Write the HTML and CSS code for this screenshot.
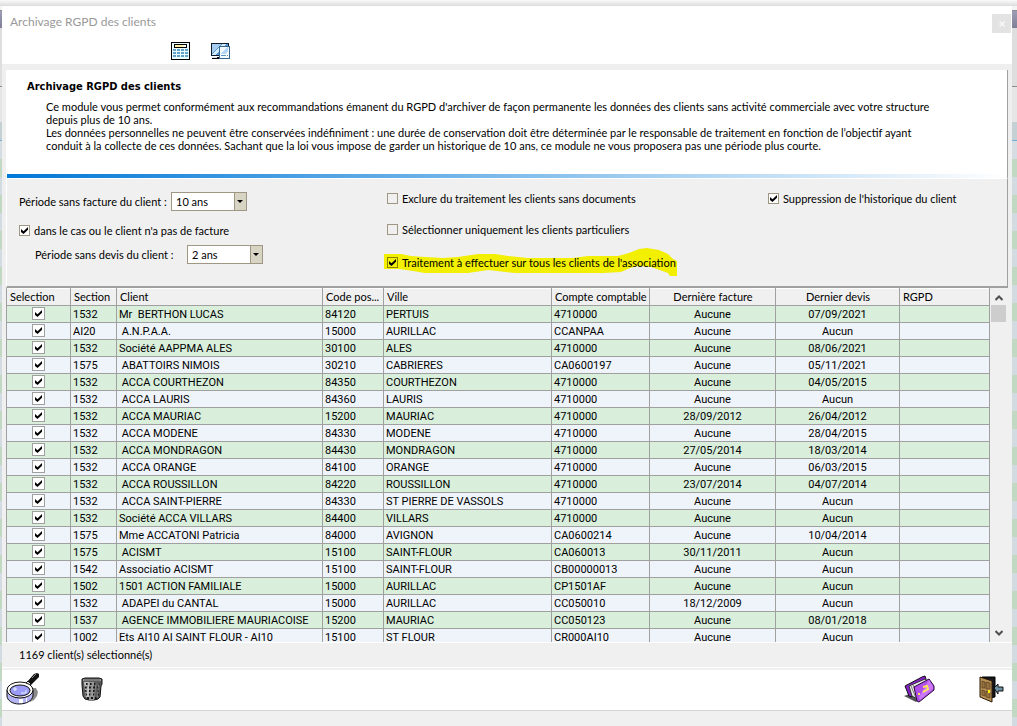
FILE: index.html
```html
<!DOCTYPE html>
<html lang="fr">
<head>
<meta charset="utf-8">
<title>Archivage RGPD des clients</title>
<link rel="stylesheet" href="styles.css">
</head>
<body>
<main class="window">
  <header class="titlebar">
    <div class="titlebar-row">
      <span class="window-title">Archivage RGPD des clients</span>
      <button class="close" type="button" aria-label="Fermer"><svg width="6" height="6" viewBox="0 0 6 6"><path d="M0.5 0.5L5.5 5.5M5.5 0.5L0.5 5.5" stroke="#f8f8f8" stroke-width="1.4"/></svg></button>
    </div>
    <div class="tools">
      <button class="icon-button" type="button" aria-label="Calculatrice">
        <svg width="19" height="18" viewBox="0 0 19 18" shape-rendering="crispEdges">
          <rect width="19" height="18" fill="#000"/><rect x="1" y="1" width="17" height="16" fill="#eafcff"/>
          <rect x="3" y="2" width="13" height="4" fill="#000"/><rect x="4" y="3" width="11" height="2" fill="#fff0a8"/><rect x="12" y="3" width="3" height="2" fill="#fff"/>
          <path d="M2 8h15M2 11h15M2 14h15" stroke="#62a3c9" stroke-width="2" stroke-dasharray="3 1"/>
        </svg>
      </button>
      <button class="icon-button" type="button" aria-label="Affichage">
        <svg width="19" height="18" viewBox="0 0 19 18" shape-rendering="crispEdges">
          <rect y="1" width="18" height="13" fill="#101c2c"/><rect x="1" y="2" width="16" height="11" fill="#5b98d4"/>
          <path d="M1 2h9L2 11H1z" fill="#a6cdf0"/><path d="M11 2h4L4 13H1z" fill="#d4ebfc"/>
          <path d="M1 15h8v2H1z" fill="#000"/><path d="M1 15h5v1H1z" fill="#dfe8f0"/>
          <rect x="8" y="4" width="11" height="13" fill="#37658d"/><rect x="9" y="5" width="9" height="11" fill="#f4fcff"/>
          <path d="M10 11l6-6h1v4l-3 3h-4z" fill="#b5d7f5"/><path d="M10 13h5v1h-5zM16 13h1v1h-1z" fill="#5b92c0"/>
        </svg>
      </button>
    </div>
  </header>

  <section class="panel">
    <div class="intro">
      <h1>Archivage RGPD des clients</h1>
      <p>Ce module vous permet conformément aux recommandations émanent du RGPD d'archiver de façon permanente les données des clients sans activité commerciale avec votre structure<br>depuis plus de 10 ans.<br>Les données personnelles ne peuvent être conservées indéfiniment : une durée de conservation doit être déterminée par le responsable de traitement en fonction de l’objectif ayant<br>conduit à la collecte de ces données. Sachant que la loi vous impose de garder un historique de 10 ans, ce module ne vous proposera pas une période plus courte.</p>
    </div>
    <div class="rule"></div>
    <form class="options">
      <div class="option-column periods">
        <div class="field"><label for="facture">Période sans facture du client :</label><span class="select"><select id="facture"><option>10 ans</option></select></span></div>
        <label class="check"><input type="checkbox" checked>dans le cas ou le client n'a pas de facture</label>
        <div class="field nested"><label for="devis">Période sans devis du client :</label><span class="select"><select id="devis"><option>2 ans</option></select></span></div>
      </div>
      <div class="option-column filters">
        <label class="check"><input type="checkbox">Exclure du traitement les clients sans documents</label>
        <label class="check"><input type="checkbox">Sélectionner uniquement les clients particuliers</label>
        <label class="check marked"><svg class="marker" width="295" height="30" viewBox="0 0 295 30"><path d="M1 7L18 7L28 9L42 10L60 11L75 10L95 7H112L125 9L145 11L190 11L205 9L235 9L246 6L256 2L264 1L276 3L285 7L290 12L294 14V29H287L285 26L268 20L255 19L247 21L238 25L220 26H132L105 23L85 26H42L30 24L16 22H1Z" fill="#f2ef00"/></svg><input type="checkbox" checked>Traitement à effectuer sur tous les clients de l'association</label>
      </div>
      <div class="option-column history">
        <label class="check"><input type="checkbox" checked>Suppression de l'historique du client</label>
      </div>
    </form>
  </section>

  <section class="grid">
    <div class="grid-view">
      <table>
        <colgroup><col class="c-sel"><col class="c-sec"><col class="c-cli"><col class="c-cp"><col class="c-city"><col class="c-acc"><col class="c-inv"><col class="c-quo"><col></colgroup>
        <thead><tr><th>Selection</th><th>Section</th><th>Client</th><th>Code pos...</th><th>Ville</th><th>Compte comptable</th><th class="mid">Dernière facture</th><th class="mid">Dernier devis</th><th>RGPD</th></tr></thead>
        <tbody>
        <tr><td><input type="checkbox" aria-label="Sélection" checked></td><td>1532</td><td>Mr&nbsp; BERTHON LUCAS</td><td>84120</td><td>PERTUIS</td><td>4710000</td><td>Aucune</td><td>07/09/2021</td><td></td></tr>
        <tr><td><input type="checkbox" aria-label="Sélection" checked></td><td>AI20</td><td>&nbsp;A.N.P.A.A.</td><td>15000</td><td>AURILLAC</td><td>CCANPAA</td><td>Aucune</td><td>Aucun</td><td></td></tr>
        <tr><td><input type="checkbox" aria-label="Sélection" checked></td><td>1532</td><td>Société AAPPMA ALES</td><td>30100</td><td>ALES</td><td>4710000</td><td>Aucune</td><td>08/06/2021</td><td></td></tr>
        <tr><td><input type="checkbox" aria-label="Sélection" checked></td><td>1575</td><td>&nbsp;ABATTOIRS NIMOIS</td><td>30210</td><td>CABRIERES</td><td>CA0600197</td><td>Aucune</td><td>05/11/2021</td><td></td></tr>
        <tr><td><input type="checkbox" aria-label="Sélection" checked></td><td>1532</td><td>&nbsp;ACCA COURTHEZON</td><td>84350</td><td>COURTHEZON</td><td>4710000</td><td>Aucune</td><td>04/05/2015</td><td></td></tr>
        <tr><td><input type="checkbox" aria-label="Sélection" checked></td><td>1532</td><td>&nbsp;ACCA LAURIS</td><td>84360</td><td>LAURIS</td><td>4710000</td><td>Aucune</td><td>Aucun</td><td></td></tr>
        <tr><td><input type="checkbox" aria-label="Sélection" checked></td><td>1532</td><td>&nbsp;ACCA MAURIAC</td><td>15200</td><td>MAURIAC</td><td>4710000</td><td>28/09/2012</td><td>26/04/2012</td><td></td></tr>
        <tr><td><input type="checkbox" aria-label="Sélection" checked></td><td>1532</td><td>&nbsp;ACCA MODENE</td><td>84330</td><td>MODENE</td><td>4710000</td><td>Aucune</td><td>28/04/2015</td><td></td></tr>
        <tr><td><input type="checkbox" aria-label="Sélection" checked></td><td>1532</td><td>&nbsp;ACCA MONDRAGON</td><td>84430</td><td>MONDRAGON</td><td>4710000</td><td>27/05/2014</td><td>18/03/2014</td><td></td></tr>
        <tr><td><input type="checkbox" aria-label="Sélection" checked></td><td>1532</td><td>&nbsp;ACCA ORANGE</td><td>84100</td><td>ORANGE</td><td>4710000</td><td>Aucune</td><td>06/03/2015</td><td></td></tr>
        <tr><td><input type="checkbox" aria-label="Sélection" checked></td><td>1532</td><td>&nbsp;ACCA ROUSSILLON</td><td>84220</td><td>ROUSSILLON</td><td>4710000</td><td>23/07/2014</td><td>04/07/2014</td><td></td></tr>
        <tr><td><input type="checkbox" aria-label="Sélection" checked></td><td>1532</td><td>&nbsp;ACCA SAINT-PIERRE</td><td>84330</td><td>ST PIERRE DE VASSOLS</td><td>4710000</td><td>Aucune</td><td>Aucun</td><td></td></tr>
        <tr><td><input type="checkbox" aria-label="Sélection" checked></td><td>1532</td><td>Société ACCA VILLARS</td><td>84400</td><td>VILLARS</td><td>4710000</td><td>Aucune</td><td>Aucun</td><td></td></tr>
        <tr><td><input type="checkbox" aria-label="Sélection" checked></td><td>1575</td><td>Mme ACCATONI Patricia</td><td>84000</td><td>AVIGNON</td><td>CA0600214</td><td>Aucune</td><td>10/04/2014</td><td></td></tr>
        <tr><td><input type="checkbox" aria-label="Sélection" checked></td><td>1575</td><td>&nbsp;ACISMT</td><td>15100</td><td>SAINT-FLOUR</td><td>CA060013</td><td>30/11/2011</td><td>Aucun</td><td></td></tr>
        <tr><td><input type="checkbox" aria-label="Sélection" checked></td><td>1542</td><td>Associatio ACISMT</td><td>15100</td><td>SAINT-FLOUR</td><td>CB00000013</td><td>Aucune</td><td>Aucun</td><td></td></tr>
        <tr><td><input type="checkbox" aria-label="Sélection" checked></td><td>1502</td><td>1501 ACTION FAMILIALE</td><td>15000</td><td>AURILLAC</td><td>CP1501AF</td><td>Aucune</td><td>Aucun</td><td></td></tr>
        <tr><td><input type="checkbox" aria-label="Sélection" checked></td><td>1532</td><td>&nbsp;ADAPEI du CANTAL</td><td>15000</td><td>AURILLAC</td><td>CC050010</td><td>18/12/2009</td><td>Aucun</td><td></td></tr>
        <tr><td><input type="checkbox" aria-label="Sélection" checked></td><td>1537</td><td>&nbsp;AGENCE IMMOBILIERE MAURIACOISE</td><td>15200</td><td>MAURIAC</td><td>CC050123</td><td>Aucune</td><td>08/01/2018</td><td></td></tr>
        <tr><td><input type="checkbox" aria-label="Sélection" checked></td><td>1002</td><td>Ets AI10 AI SAINT FLOUR - AI10</td><td>15100</td><td>ST FLOUR</td><td>CR000AI10</td><td>Aucune</td><td>Aucun</td><td></td></tr>
        </tbody>
      </table>
    </div>
    <div class="scrollbar">
      <button type="button" aria-label="Défiler vers le haut"><svg width="8" height="6" viewBox="0 0 8 6"><path d="M0.5 5L4 1.5L7.5 5" fill="none" stroke="#505050" stroke-width="2"/></svg></button>
      <div class="thumb"></div>
      <button type="button" aria-label="Défiler vers le bas"><svg width="8" height="6" viewBox="0 0 8 6"><path d="M0.5 1L4 4.5L7.5 1" fill="none" stroke="#505050" stroke-width="2"/></svg></button>
    </div>
  </section>

  <div class="status">1169 client(s) sélectionné(s)</div>

  <footer class="actions">
    <button class="icon-button" type="button" aria-label="Rechercher">
      <svg width="34" height="32" viewBox="0 0 34 32">
        <path d="M26 15h4l2 4-1 4-3 4-4 2z" fill="#8c8c8c"/>
        <path d="M21 9L28 1l3-1 2 1v3l-8 8z" fill="#111"/><path d="M26 5l4-4" stroke="#888"/>
        <path d="M19 11l3-3 3 3-4 3z" fill="#ddd" stroke="#111"/>
        <path d="M1 17v6c0 4 5 8 12 8s13-3 14-8v-6z" fill="#b4b4f4" stroke="#111"/>
        <path d="M13 26h4v4h-4zM20 25h1v4h-1z" fill="#fff"/>
        <ellipse cx="14" cy="17" rx="13" ry="8" fill="#fff" stroke="#111"/>
        <ellipse cx="14" cy="17.5" rx="10" ry="5.5" fill="#9c9cf8" stroke="#111"/>
        <path d="M9 14v4M7 16h4M15 20h5v-3" fill="none" stroke="#e4f4ff"/>
      </svg>
    </button>
    <button class="icon-button bin" type="button" aria-label="Supprimer">
      <svg width="22" height="24" viewBox="0 0 22 24">
        <path d="M1 2l3-1h14l3 1v5l-1 2-1 11-2 2-4 1H8l-4-1-2-3L1 8z" fill="#5c5c5c" stroke="#111"/>
        <path d="M3 5h5v17l-3-2z" fill="#c4c4c4"/><path d="M8 5h5v18H8z" fill="#979797"/>
        <path d="M5 7l14 0M4 10.5l15 0M4 14l15 0M4 17.5l14 0M6 21h11" stroke="#161616" stroke-width="2" stroke-dasharray="2 2"/>
        <path d="M7 6l-3 14M11 6l-2 16M15 6l-2 16M18 6l-2 15" stroke="#8b8b8b" stroke-width=".8"/>
        <path d="M2 2h18v2H2z" fill="#a0a0a0"/><path d="M3 3h16" stroke="#555"/>
      </svg>
    </button>
    <button class="icon-button help" type="button" aria-label="Aide">
      <svg width="31" height="28" viewBox="0 0 31 28">
        <path d="M0 21l8-3 7 7-3 2z" fill="#555"/>
        <path d="M1 11L18 2l3-1 1 3-14 18-3-1z" fill="#8420c8" stroke="#111"/>
        <path d="M5 11L21 4l3 2-11 18-5-3z" fill="#ececec" stroke="#333"/>
        <path d="M7 11l5 12M9 10l5 12" stroke="#777"/>
        <path d="M10 12L25 4l5 7v4L15 27l-2-1z" fill="#b04ee8" stroke="#260838"/>
        <path d="M25 5l4 6v3l-13 11-1-3z" fill="#cb77fa"/>
        <path d="M19 12l4-1 1 3-3 2-2 1M16 19h-2" fill="none" stroke="#ffe45a" stroke-width="2"/>
      </svg>
    </button>
    <button class="icon-button" type="button" aria-label="Quitter">
      <svg width="25" height="27" viewBox="0 0 25 27">
        <path d="M3 1h13v20l-5 1z" fill="#16161c" stroke="#000"/>
        <path d="M1 1l12 4v21L1 21z" fill="#b89156" stroke="#2c1a06"/>
        <path d="M3 5l3 1v6H3zM7 6l4 1v6H7zM3 14l3 1v5l-3-1zM7 15l4 1v6l-4-1z" fill="#957040" stroke="#594020" stroke-width=".7"/>
        <path d="M9 14h2v3H9z" fill="#fff200"/>
        <path d="M15 12l4-4v3h5v4h-5v3z" fill="#6f91a3" stroke="#111"/>
      </svg>
    </button>
  </footer>
  <div class="bottom-bar"></div>
</main>
</body>
</html>
```
FILE: styles.css
```css
* { box-sizing: border-box; }

body {
  margin: 0;
  font: 11px/13px Lato, "Liberation Sans", Arial, sans-serif;
  color: #000;
  background:
    linear-gradient(#f4f4f4 0 10px, #8c8c8c 10px 11px, #9c9cb4 11px, #7f7f98 28px, #dedede 28px 86px, #8c8c8c 86px 87px, #e6e6e6 87px 122px, #c5d0d4 122px 140px, #70b0d8 140px 141px, #d5dce2 141px 159px, transparent 159px),
    repeating-linear-gradient(#d3dbe2 0 15px, #c1d9c3 15px 33px, #d3dbe2 33px 36px);
  background-size: 100% 100%, 100% 36px;
}

button { padding: 0; border: 0; background: none; font: inherit; }
svg { display: block; }
h1, p { margin: 0; }

.window {
  display: flex;
  flex-direction: column;
  height: 100vh;
  padding: 6px 5px 0 2px;
  background: linear-gradient(#fafafa, #dcdcdc) top / 100% 6px no-repeat;
}

.titlebar { height: 58px; background: #fff; }
.titlebar-row { display: flex; justify-content: space-between; padding-left: 8px; height: 36px; }
.window-title { padding-top: 8px; font-size: 12px; line-height: 15px; color: #999; }
.close { display: grid; place-items: center; width: 19px; height: 19px; margin: 8px 1px 0 0; background: #e3e3e3; }
.tools { display: flex; gap: 21px; padding-left: 169px; }

.panel {
  border-top: 6px solid #efefef;
  border-left: 4px solid #efefef;
  border-right: 4px solid #efefef;
  background: #f0f0f0;
}
.intro {
  height: 104px;
  padding: 10px 0 0 21px;
  background: #fff;
  border-right: 1px solid #a0a0a0;
}
.intro h1 { font: bold 11px/14px "DejaVu Sans Condensed", Tahoma, sans-serif; }
.intro p { padding: 6px 0 0 19px; white-space: nowrap; }
.rule {
  height: 5px;
  border-left: 1px solid #fff;
  border-right: 1px solid #a0a0a0;
  border-bottom: 1px solid #fff;
  background: linear-gradient(90deg, #0078d7, #fff);
}

.options {
  display: grid;
  grid-template-columns: 367px 381px 1fr;
  height: 109px;
  padding: 12px 0 0 12px;
  border-left: 1px solid #fff;
  border-right: 1px solid #a0a0a0;
  border-bottom: 2px solid #a0a0a0;
}
.option-column { display: flex; flex-direction: column; align-items: flex-start; }
.periods { padding-top: 1px; }
.field { display: flex; align-items: center; }
.field label { width: 152px; }
.nested { padding-left: 16px; margin-top: 8px; }
.periods .check { margin-top: 13px; }
.filters, .history { padding: 1px 0 0 1px; }
.filters .check + .check { margin-top: 18px; }
.filters .marked.check { margin-top: 20px; }
.check { display: flex; align-items: center; gap: 4px; position: relative; }
.marked { isolation: isolate; }
.marker { position: absolute; left: -4px; top: -9px; z-index: -1; }

input {
  appearance: none;
  display: grid;
  place-items: center;
  flex: none;
  width: 11px;
  height: 11px;
  margin: 0;
  border: 1px solid #a09684;
}
input:checked { background: #fff; }
.marked input:checked { background: none; border-color: #8c8400; }
input:checked::before {
  content: "";
  width: 7px;
  height: 7px;
  background: #000;
  clip-path: polygon(0 30%, 36% 62%, 100% 0, 100% 40%, 36% 100%, 0 70%);
}

.select { position: relative; display: flex; }
select {
  appearance: none;
  width: 76px;
  height: 19px;
  padding: 0 4px;
  border: 1px solid #a09684;
  border-radius: 0;
  background: linear-gradient(90deg, #fff 62px, #a09684 62px 63px, #d8d4c4 63px);
  font: inherit;
  color: #000;
}
.select::after {
  content: "";
  position: absolute;
  right: 4px;
  top: 8px;
  border: 3px solid transparent;
  border-top-color: #000;
  border-bottom: 0;
}

.grid { flex: 1; min-height: 0; display: flex; padding: 0 5px 0 4px; overflow: hidden; background: #f0f0f0; border-bottom: 1px solid #fff; }
.grid-view { flex: 1; min-width: 0; overflow: hidden; border-left: 1px solid #a0a0a0; }
table { width: 100%; table-layout: fixed; border-collapse: separate; border-spacing: 0; }
.c-sel { width: 64px; }
.c-sec { width: 46px; }
.c-cli { width: 206px; }
.c-cp { width: 61px; }
.c-city { width: 168px; }
.c-acc { width: 98px; }
.c-inv { width: 126px; }
.c-quo { width: 124px; }
th, td {
  height: 17px;
  padding: 0 2px;
  border-right: 1px solid #a0a0a0;
  border-bottom: 1px solid #a0a0a0;
  text-align: left;
  font-weight: normal;
  line-height: 13px;
  white-space: nowrap;
}
td { font-family: Roboto, "Liberation Sans", Arial, sans-serif; }
th { height: 18px; padding-left: 3px; background: linear-gradient(#fff 0 1px, #f0f0f0 1px); }
.mid, td:nth-child(7), td:nth-child(8) { text-align: center; }
tbody tr:nth-child(odd) { background: #d9efdc; }
tbody tr:nth-child(even) { background: #eff4fa; }
td:first-child { vertical-align: top; }
td input { width: 13px; height: 13px; margin: 1px auto 0; border-color: #a0a0a0; }

.scrollbar { display: flex; flex-direction: column; align-items: center; width: 17px; padding: 3px 0 2px; }
.scrollbar button { display: grid; place-items: center; width: 17px; height: 14px; }
.thumb { width: 15px; height: 17px; margin-bottom: auto; background: #cdcdcd; }

.status { height: 25px; padding: 5px 17px; background: #f0f0f0; border-bottom: 1px solid #fff; }
.actions {
  display: flex;
  align-items: center;
  height: 43px;
  padding: 0 8px 2px 4px;
  background: #fff;
  border-top: 2px solid #f0f0f0;
  border-bottom: 1px solid #d4d4d4;
}
.bin { margin-left: 41px; }
.help { margin: 0 44px 0 auto; }
.bottom-bar { height: 15px; background: #f0f0f0; }
```
